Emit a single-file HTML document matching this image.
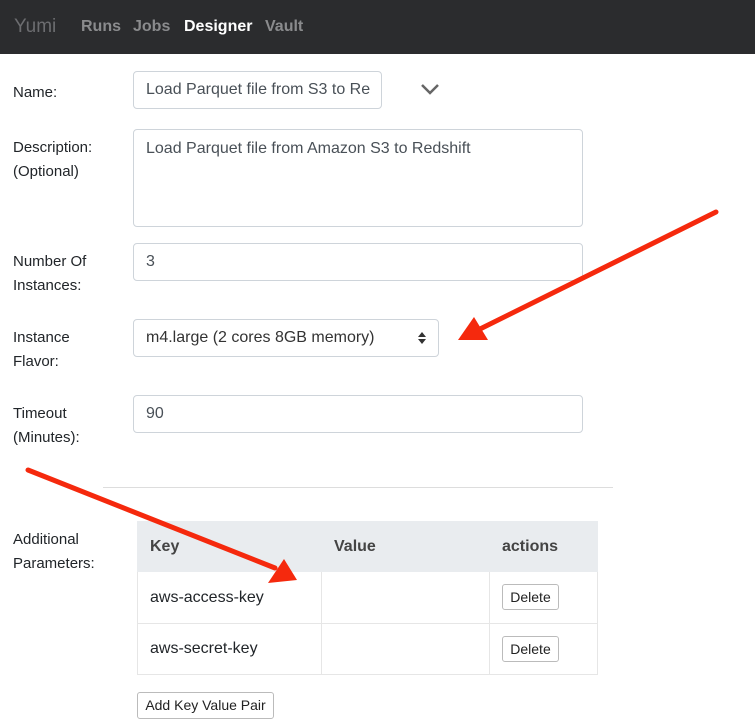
<!DOCTYPE html>
<html><head><style>
*{box-sizing:border-box;margin:0;padding:0}
body{width:755px;height:727px;background:#fff;font-family:"Liberation Sans",sans-serif;color:#212529;position:relative;overflow:hidden;font-size:16px}
.nav{position:absolute;left:0;top:0;width:755px;height:54px;background:#2b2c2e}
.nav span{position:absolute;top:18px;font-size:16px;color:#8a8b8d;font-weight:bold}
.lbl{position:absolute;left:13px;font-size:15px;line-height:24px;color:#212529}
.inp{position:absolute;border:1px solid #ced4da;border-radius:4px;background:#fff;font-size:16px;padding-left:12px;color:#495057}
.btn{position:absolute;border:1px solid #bbb;border-radius:3px;background:#fff;font-size:13px;text-align:center;color:#222}
.cell{position:absolute;font-size:16px}
</style></head><body>
<div class="nav">
<span style="left:14px;font-size:19px;top:16px;color:#6c6d70;font-weight:normal">Yumi</span>
<span style="left:81px">Runs</span>
<span style="left:133px">Jobs</span>
<span style="left:184px;color:#fff">Designer</span>
<span style="left:265px">Vault</span>
</div>
<div class="lbl" style="top:81px">Name:</div>
<div class="inp" style="left:133px;top:71px;width:249px;height:38px;line-height:36px">Load Parquet file from S3 to Re</div>
<svg style="position:absolute;left:420px;top:82px" width="20" height="14"><path d="M2 3 L10 11 L18 3" stroke="#666" stroke-width="2.5" fill="none"/></svg>
<div class="lbl" style="top:136px">Description:<br>(Optional)</div>
<div class="inp" style="left:133px;top:129px;width:450px;height:98px;padding-top:9px;line-height:20px">Load Parquet file from Amazon S3 to Redshift</div>
<div class="lbl" style="top:250px">Number Of<br>Instances:</div>
<div class="inp" style="left:133px;top:243px;width:450px;height:38px;line-height:36px">3</div>
<div class="lbl" style="top:326px">Instance<br>Flavor:</div>
<div class="inp" style="left:133px;top:319px;width:306px;height:38px;line-height:36px;color:#333">m4.large (2 cores 8GB memory)</div>
<svg style="position:absolute;left:417px;top:331px" width="10" height="14"><path d="M1 6 L5 1 L9 6Z M1 8 L5 13 L9 8Z" fill="#333"/></svg>
<div class="lbl" style="top:402px">Timeout<br>(Minutes):</div>
<div class="inp" style="left:133px;top:395px;width:450px;height:38px;line-height:36px">90</div>
<div style="position:absolute;left:103px;top:487px;width:510px;height:1px;background:#ddd"></div>
<div class="lbl" style="top:528px">Additional<br>Parameters:</div>
<div style="position:absolute;left:137px;top:521px;width:461px;height:51px;background:#e9ecef"></div>
<div style="position:absolute;left:137px;top:572px;width:461px;height:103px;border:1px solid #e6e6e6;border-top:none"></div>
<div style="position:absolute;left:137px;top:623px;width:461px;height:1px;background:#e6e6e6"></div>
<div style="position:absolute;left:321px;top:572px;width:1px;height:103px;background:#e6e6e6"></div>
<div style="position:absolute;left:489px;top:572px;width:1px;height:103px;background:#e6e6e6"></div>
<div class="cell" style="left:150px;top:538px;font-weight:bold;color:#444">Key</div>
<div class="cell" style="left:334px;top:538px;font-weight:bold;color:#444">Value</div>
<div class="cell" style="left:502px;top:538px;font-weight:bold;color:#444">actions</div>
<div class="cell" style="left:150px;top:589px">aws-access-key</div>
<div class="cell" style="left:150px;top:640px">aws-secret-key</div>
<div class="btn" style="left:502px;top:584px;width:57px;height:26px;line-height:24px;font-size:14px">Delete</div>
<div class="btn" style="left:502px;top:636px;width:57px;height:26px;line-height:24px;font-size:14px">Delete</div>
<div class="btn" style="left:137px;top:692px;width:137px;height:27px;line-height:25px;font-size:14px">Add Key Value Pair</div>
<svg style="position:absolute;left:0;top:0" width="755" height="727">
<line x1="716" y1="212" x2="478" y2="330" stroke="#f5290d" stroke-width="5" stroke-linecap="round"/>
<polygon points="458,340 474,317 488,340" fill="#f5290d"/>
<line x1="28" y1="470" x2="275" y2="568" stroke="#f5290d" stroke-width="5" stroke-linecap="round"/>
<polygon points="297,580 268,583 284,559" fill="#f5290d"/>
</svg>
</body></html>
